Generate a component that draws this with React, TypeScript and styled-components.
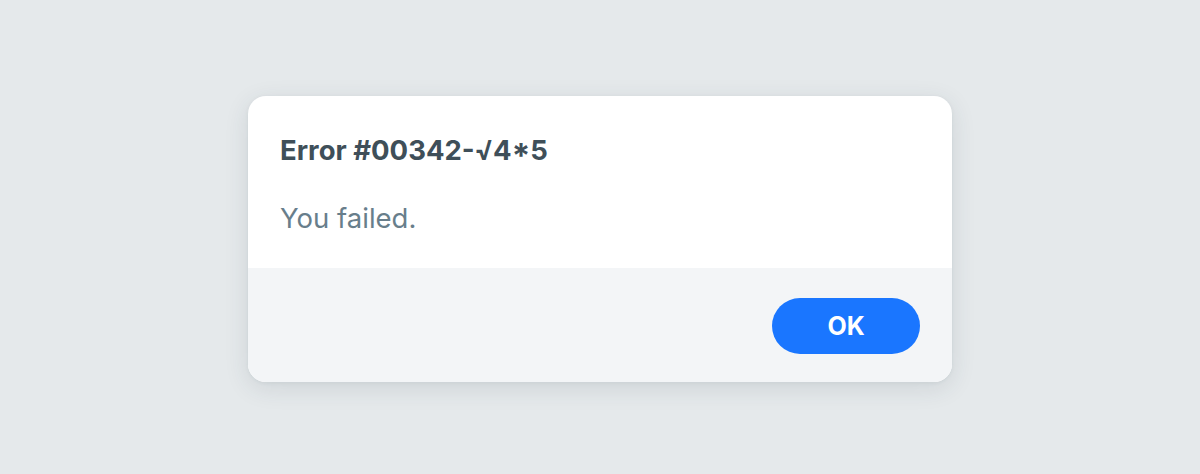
import React from "react";
import styled, { createGlobalStyle } from "styled-components";

const Global = createGlobalStyle`
  html, body { margin: 0; padding: 0; }
  body {
    background: #e5e9eb;
    font-family: Inter, "Noto Sans", sans-serif;
    -webkit-font-smoothing: antialiased;
  }
`;

const Page = styled.div`
  width: 1200px;
  height: 474px;
  display: flex;
  justify-content: center;
  padding-top: 96px;
  box-sizing: border-box;
`;

const Dialog = styled.div`
  width: 704px;
  height: 286px;
  border-radius: 18px;
  background: #ffffff;
  overflow: hidden;
  display: flex;
  flex-direction: column;
  box-shadow: 0 6px 24px rgba(40, 60, 70, 0.12), 0 1px 4px rgba(40, 60, 70, 0.06);
`;

const Body = styled.div`
  height: 172px;
  box-sizing: border-box;
  padding: 37px 32px 0;
  display: flex;
  flex-direction: column;
`;

const Title = styled.h2`
  margin: 0;
  font-size: 27.5px;
  line-height: 34px;
  font-weight: 700;
  color: #3f4f59;
`;

const Message = styled.p`
  margin: 34px 0 0;
  font-size: 27.5px;
  line-height: 34px;
  font-weight: 400;
  color: #687e8b;
`;

const Footer = styled.div`
  flex: 1;
  background: #f3f5f7;
  display: flex;
  justify-content: flex-end;
  align-items: flex-start;
  padding: 30px 32px 0;
`;

const Button = styled.button`
  width: 148px;
  height: 56px;
  border: none;
  border-radius: 28px;
  background: #1a76ff;
  color: #ffffff;
  font-family: Inter, "Noto Sans", sans-serif;
  font-size: 25px;
  font-weight: 700;
  cursor: pointer;
`;

export default function App() {
  return (
    <>
      <Global />
      <Page>
        <Dialog>
          <Body>
            <Title>Error #00342-√4*5</Title>
            <Message>You failed.</Message>
          </Body>
          <Footer>
            <Button>OK</Button>
          </Footer>
        </Dialog>
      </Page>
    </>
  );
}
